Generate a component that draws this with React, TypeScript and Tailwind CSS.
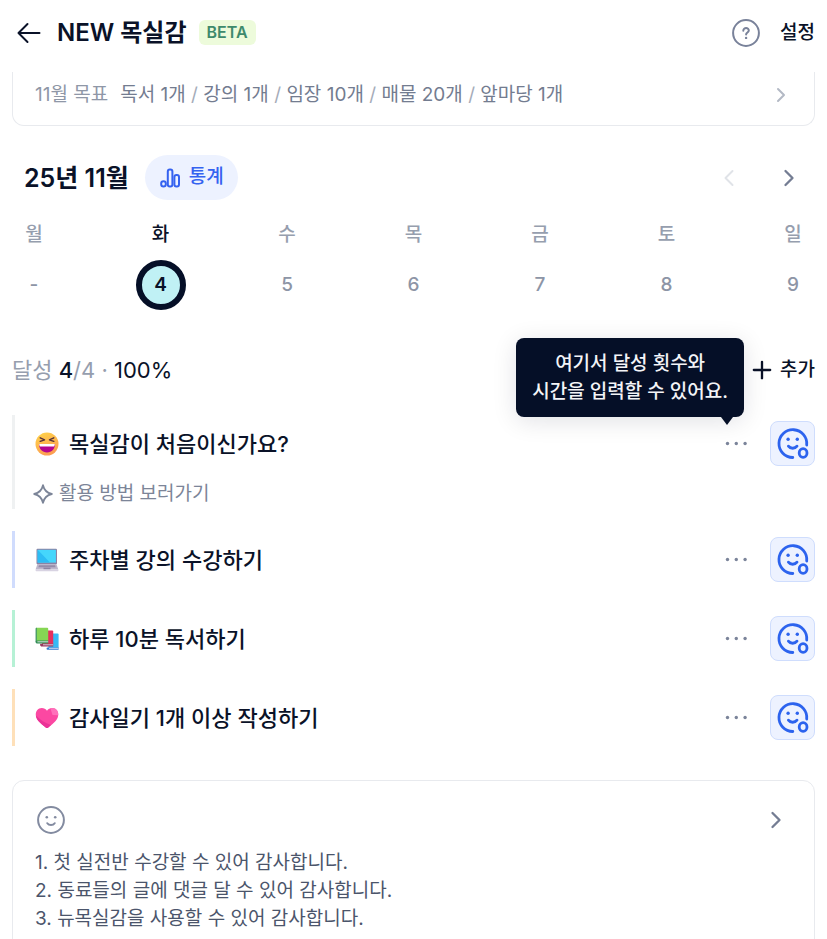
import React from 'react';
import { Plus, ChevronLeft, ChevronRight } from 'lucide-react';

interface Day {
    label: string;
    date: string;
    selected?: boolean;
}

interface Habit {
    title: string;
    icon: React.ReactNode;
    bar: string;
    guide?: string;
    tooltip?: string[];
}

const LaughEmoji = () => (
    <svg viewBox="0 0 24 24" className="w-6 h-6 shrink-0" aria-hidden="true">
        <defs>
            <linearGradient id="face" x1="0.3" y1="0" x2="0.7" y2="1">
                <stop offset="0" stopColor="#ffd04a" />
                <stop offset="1" stopColor="#fb9a52" />
            </linearGradient>
        </defs>
        <circle cx="12" cy="12" r="11.5" fill="url(#face)" />
        <path d="M5.2 5.8 9.6 7.8 5.2 9.4M18.8 5.8l-4.4 2 4.4 1.6" fill="none" stroke="#54303c" strokeWidth="1.4" strokeLinecap="round" strokeLinejoin="round" />
        <path d="M4.2 12h15.6c.5 4.8-3 8.4-7.800 8.400S3.700 16.800 4.200 12Z" fill="#b4068f" />
        <path d="M4.200 12h15.600l-.4 1.900c-.2.500-.6.700-1.200.700H5.800c-.6 0-1-.2-1.200-.700Z" fill="#fff" />
    </svg>
);

const LaptopEmoji = () => (
    <svg viewBox="0 0 24 24" className="w-6 h-6 shrink-0" aria-hidden="true">
        <rect x="1.5" y="0.8" width="20.5" height="15.4" rx="1" fill="#8b83a5" />
        <rect x="2.6" y="1.8" width="18.3" height="12.8" fill="#45d6fc" />
        <path d="M2.6 1.8 15 14.6H2.6Z" fill="#2dbcf4" />
        <path d="M2.4 16h19l1.9 5.4H.6Z" fill="#bdb6cb" />
        <path d="M4 17.2h16l.6 2H3.4Z" fill="#958ca9" />
        <rect x="8.5" y="19.6" width="7" height="1.8" fill="#8d84a2" />
        <rect x="0.6" y="21.4" width="22.8" height="1.8" rx="0.6" fill="#d8d3e2" />
    </svg>
);

const BooksEmoji = () => (
    <svg viewBox="0 0 24 24" className="w-6 h-6 shrink-0" aria-hidden="true">
        <path d="M13.4 6.6h9.2a1 1 0 0 1 1 1v13.8H13.4Z" fill="#37b9f4" />
        <path d="M12 20.4h11.6v2.4H12.6c-1.4 0-1.4-2.4 0-2.4Z" fill="#3178cf" />
        <path d="M14 20.8h9.6v1H14Z" fill="#d5dcf0" />
        <path d="M7 3.4h10.2a1 1 0 0 1 1 1v13.4H7Z" fill="#e5305d" />
        <path d="M5.6 16.8h12.6v2.8H6.6c-1.5 0-2-2.8-1-2.8Z" fill="#99395e" />
        <path d="M8 17.3h10.2v1H8Z" fill="#d9c9d8" />
        <path d="M1.4.8h10.8a1 1 0 0 1 1 1v12.6H1.4Z" fill="#86d654" />
        <path d="M.6 1.8C.6 1.2 1 .8 1.8.8v14H.6Z" fill="#338d57" />
        <path d="M1.6 13.6h11.6v3H1.8C.3 16.6.2 13.6 1.6 13.6Z" fill="#338d57" />
        <path d="M2.4 14.3h10.8v1H2.4Z" fill="#d3e5d8" />
    </svg>
);

const HeartEmoji = () => (
    <svg viewBox="0 0 24 24" className="w-6 h-6 shrink-0" aria-hidden="true">
        <path d="M12 4.700C9.900 1.300 4.600.9 2.100 4.200c-2.300 3.100-1.500 7.500 1.300 10.700 2.200 2.500 5 4.700 7.300 6.500.8.7 1.800.7 2.600 0 2.300-1.800 5.100-4 7.300-6.500 2.800-3.200 3.600-7.600 1.300-10.700C19.400.9 14.100 1.300 12 4.700Z" fill="#fb48a2" />
        <path d="M15.500 2.400c2.300-.9 5 0 6.400 1.800 1.100 1.500 1.500 3.300 1.300 5.100L17.500 9Z" fill="#ff70ba" />
        <path d="M1 9.500c4 4.500 9 7.500 15 9.600l-2.700 2.300c-.8.7-1.800.7-2.600 0-2.300-1.800-5.100-4-7.300-6.500C2 13.300 1.200 11.400 1 9.500Z" fill="#ea3397" />
    </svg>
);

const days: Day[] = [
    { label: '월', date: '-' },
    { label: '화', date: '4', selected: true },
    { label: '수', date: '5' },
    { label: '목', date: '6' },
    { label: '금', date: '7' },
    { label: '토', date: '8' },
    { label: '일', date: '9' },
];

const goals = ['독서 1개', '강의 1개', '임장 10개', '매물 20개', '앞마당 1개'];

const habits: Habit[] = [
    {
        title: '목실감이 처음이신가요?',
        icon: <LaughEmoji />,
        bar: 'border-[#eff1f2]',
        guide: '활용 방법 보러가기',
        tooltip: ['여기서 달성 횟수와', '시간을 입력할 수 있어요.'],
    },
    { title: '주차별 강의 수강하기', icon: <LaptopEmoji />, bar: 'border-[#d0dcfd]' },
    { title: '하루 10분 독서하기', icon: <BooksEmoji />, bar: 'border-[#b6f1d5]' },
    { title: '감사일기 1개 이상 작성하기', icon: <HeartEmoji />, bar: 'border-[#fee0b9]' },
];

const gratitude = [
    '1. 첫 실전반 수강할 수 있어 감사합니다.',
    '2. 동료들의 글에 댓글 달 수 있어 감사합니다.',
    '3. 뉴목실감을 사용할 수 있어 감사합니다.',
];

const Header = () => (
    <header className="sticky top-0 z-20 flex items-center h-[72px] pb-[7px] pl-4 pr-3 bg-white">
        <button aria-label="뒤로" className="mr-4">
            <svg viewBox="0 0 25 24" className="w-[25px] h-6" fill="none" stroke="currentColor" strokeWidth="2" strokeLinecap="round" strokeLinejoin="round">
                <path d="M23.5 12H2.500M11.500 3l-9 9 9 9" />
            </svg>
        </button>
        <h1 className="text-[24px] leading-8 font-semibold">NEW 목실감</h1>
        <span className="ml-3 px-2 h-[25px] leading-[25px] rounded-md bg-[#edfbdb] text-[16px] font-semibold text-[#3e8a6c]">BETA</span>
        <button aria-label="도움말" className="ml-auto">
            <svg viewBox="0 0 28 28" className="w-7 h-7" fill="none" stroke="#79829a" strokeWidth="2" strokeLinecap="round" strokeLinejoin="round">
                <circle cx="14" cy="14" r="12.9" />
                <path d="M11.300 11.700c0-3.700 5.700-3.400 5.500-.2-.1 2-2.700 2-2.700 4" />
                <circle cx="14.100" cy="18.900" r="1.200" fill="#79829a" stroke="none" />
            </svg>
        </button>
        <button className="ml-5 text-[19px] leading-7 font-medium">설정</button>
    </header>
);

const WeekCalendar = () => (
    <section>
        <div className="flex items-center px-3 h-[45px]">
            <h2 className="text-[25px] leading-8 font-semibold">25년 11월</h2>
            <button className="flex items-center gap-2 ml-4 px-[14px] h-[45px] rounded-full bg-[#edf2ff] text-[#3562f0] text-[19px] font-medium">
                <svg viewBox="0 0 22 22" className="w-[22px] h-[22px]" fill="none" stroke="currentColor" strokeWidth="2">
                    <rect x="2.200" y="14.300" width="4.600" height="5.200" rx="2.300" />
                    <rect x="8.800" y="2.500" width="4.600" height="17" rx="2" />
                    <rect x="15.400" y="8" width="4.600" height="11.500" rx="2" />
                </svg>
                통계
            </button>
            <div className="flex items-center gap-8 ml-auto">
                <button aria-label="이전 주">
                    <ChevronLeft className="w-7 h-7 text-[#e0e3e8]" strokeWidth={1.7} />
                </button>
                <button aria-label="다음 주">
                    <ChevronRight className="w-7 h-7 text-[#747d93]" strokeWidth={2} />
                </button>
            </div>
        </div>
        <div className="flex justify-between mt-[21px] -mx-[3px]">
            {days.map((day) => (
                <button key={day.label} className="flex flex-col items-center gap-[11px] w-[50px]">
                    <span className={day.selected ? 'text-[19px] leading-7 font-medium' : 'text-[19px] leading-7 font-medium text-[#969eae]'}>
                        {day.label}
                    </span>
                    <span
                        className={
                            day.selected
                                ? 'flex items-center justify-center w-[50px] h-[50px] rounded-full border-[6px] border-[#050f27] bg-[#c0f1f5] text-[19px] font-semibold'
                                : 'flex items-center justify-center w-[50px] h-[50px] text-[19px] font-medium text-[#8d95a6]'
                        }
                    >
                        {day.date}
                    </span>
                </button>
            ))}
        </div>
    </section>
);

const Tooltip = ({ lines }: { lines: string[] }) => (
    <div
        role="tooltip"
        className="absolute right-1 bottom-[39px] z-10 px-4 pt-3 pb-[11px] rounded-lg bg-[#050f27] text-[#f3f4f7] text-[19px] leading-7 font-medium text-center whitespace-nowrap shadow-[0_4px_24px_rgba(5,15,39,0.12)]"
    >
        {lines.map((line) => (
            <p key={line}>{line}</p>
        ))}
        <span className="absolute top-full right-[11px] border-x-[6px] border-t-[8px] border-x-transparent border-t-[#050f27]" />
    </div>
);

const HabitRow = ({ habit }: { habit: Habit }) => (
    <li className={`border-l-[3px] pl-5 ${habit.bar}`}>
        <div className="flex items-center h-[57px]">
            {habit.icon}
            <h3 className="ml-[10px] text-[22px] leading-8 font-medium">{habit.title}</h3>
            <div className="relative flex ml-auto mr-[22px]">
                <button aria-label="더보기">
                    <svg viewBox="0 0 24 24" className="w-6 h-6" fill="#7b849a">
                        <circle cx="3.500" cy="11.500" r="1.700" />
                        <circle cx="12.300" cy="11.500" r="1.700" />
                        <circle cx="21.100" cy="11.500" r="1.700" />
                    </svg>
                </button>
                {habit.tooltip && <Tooltip lines={habit.tooltip} />}
            </div>
            <button aria-label="달성" className="flex items-center justify-center w-[45px] h-[45px] rounded-lg border border-[#cfddfd] bg-[#edf2ff]">
                <svg viewBox="0 0 45 45" className="w-[45px] h-[45px] shrink-0" fill="none" stroke="#2c63ee" strokeWidth="2.800" strokeLinecap="round">
                    <path d="M22.800 36.500A13.900 13.900 0 1 1 36.700 24" />
                    <path d="M18.400 25.200c2 2.700 6.500 2.700 8.600 0" />
                    <circle cx="18.100" cy="18.300" r="1.700" fill="#2c63ee" stroke="none" />
                    <circle cx="27.300" cy="18.300" r="1.700" fill="#2c63ee" stroke="none" />
                    <ellipse cx="33.100" cy="32" rx="3.900" ry="4.400" />
                </svg>
            </button>
        </div>
        {habit.guide && (
            <a href="#guide" className="flex items-center gap-[6px] h-[37px] pt-[7px] -ml-[2px] text-[19px] leading-7 text-[#7c8598]">
                <svg viewBox="0 0 20 20" className="w-5 h-5" fill="none" stroke="currentColor" strokeWidth="1.800" strokeLinejoin="round">
                    <path d="M10 1.200Q11.600 8.400 18.800 10 11.600 11.600 10 18.800 8.400 11.600 1.200 10 8.400 8.400 10 1.200Z" />
                </svg>
                {habit.guide}
            </a>
        )}
    </li>
);

const App: React.FC = () => {
    return (
        <div className="min-h-screen bg-white text-[#0a1228] font-['Inter','Noto_Sans_CJK_KR',sans-serif]">
            <Header />
            <main className="px-3 pb-6">
                <button className="flex items-center w-full h-[54px] pl-[22px] pr-[21px] pb-2 border-x border-b border-[#e8eaee] rounded-b-xl text-[19px] leading-7 text-[#737c90]">
                    <span className="mr-3 text-[#8f97a7]">11월 목표</span>
                    {goals.map((goal, i) => (
                        <span key={goal} className="whitespace-pre">
                            {i > 0 && <span className="text-[#a5acb9]"> / </span>}
                            {goal}
                        </span>
                    ))}
                    <ChevronRight className="w-6 h-6 ml-auto text-[#b3b9c5]" strokeWidth={2} />
                </button>

                <div className="mt-[29px]">
                    <WeekCalendar />
                </div>

                <div className="flex items-center justify-between mt-[46px]">
                    <p className="text-[22px] leading-7 text-[#969eae]">
                        달성 <span className="font-medium text-[#0a1228]">4</span>/4 · <span className="text-[#0a1228]">100%</span>
                    </p>
                    <button className="flex items-center gap-1 text-[19px] leading-7 font-medium">
                        <Plus className="w-7 h-7" strokeWidth={2} />
                        추가
                    </button>
                </div>

                <ul className="flex flex-col gap-[22px] mt-[31px]">
                    {habits.map((habit) => (
                        <HabitRow key={habit.title} habit={habit} />
                    ))}
                </ul>

                <section className="mt-[34px] px-[22px] pt-[25px] pb-6 rounded-xl border border-[#e8eaee]">
                    <div className="flex items-center justify-between pl-[2px]">
                        <svg viewBox="0 0 28 28" className="w-7 h-7" fill="none" stroke="#838ba0" strokeWidth="2" strokeLinecap="round">
                            <circle cx="14" cy="14" r="12.900" />
                            <path d="M10.300 17.200c1.700 2.500 5.700 2.500 7.400 0" />
                            <circle cx="9.800" cy="11.200" r="1.300" fill="#838ba0" stroke="none" />
                            <circle cx="18.200" cy="11.200" r="1.300" fill="#838ba0" stroke="none" />
                        </svg>
                        <button aria-label="감사일기 보기">
                            <ChevronRight className="w-8 h-7 text-[#747d93]" strokeWidth={2} />
                        </button>
                    </div>
                    <div className="mt-[15px] text-[19px] leading-7 text-[#4b556b]">
                        {gratitude.map((line) => (
                            <p key={line}>{line}</p>
                        ))}
                    </div>
                </section>
            </main>
        </div>
    );
};

export default App;
